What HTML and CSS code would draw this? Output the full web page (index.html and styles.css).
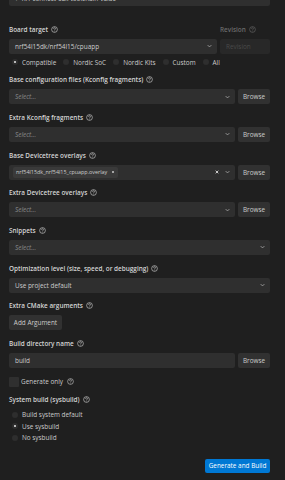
FILE: index.html
```html
<!DOCTYPE html>
<html lang="en">
<head>
  <meta charset="UTF-8">
  <meta name="viewport" content="width=device-width, initial-scale=1.0">
  <title>Add Build Configuration</title>
  <link rel="stylesheet" href="styles.css">
</head>
<body>
  <div class="panel">
    <!-- toolchain select, scrolled mostly out of view -->
    <div class="select select-top">
      <span class="value">&#10003; nrf-connect-sdk-toolchain-value</span>
    </div>

    <div class="field board">
      <div class="board-row">
        <div class="board-main">
          <div class="label">Board target <span class="help"><svg viewBox="0 0 8 8"><circle cx="4" cy="4" r="3.3"/><path d="M2.9 3.1a1.1 1.1 0 1 1 1.6 1c-.4.2-.5.4-.5.8"/><circle class="dot" cx="4" cy="6" r=".35"/></svg></span></div>
          <div class="select">
            <span class="value">nrf54l15dk/nrf54l15/cpuapp</span>
            <svg class="chevron" viewBox="0 0 8 5"><path d="M1 1l3 3 3-3"/></svg>
          </div>
        </div>
        <div class="board-rev">
          <div class="label disabled">Revision <span class="help"><svg viewBox="0 0 8 8"><circle cx="4" cy="4" r="3.3"/><path d="M2.9 3.1a1.1 1.1 0 1 1 1.6 1c-.4.2-.5.4-.5.8"/><circle class="dot" cx="4" cy="6" r=".35"/></svg></span></div>
          <div class="input input-disabled">Revision</div>
        </div>
      </div>
      <div class="radios radios-inline">
        <span class="radio-item"><span class="radio checked"></span>Compatible</span>
        <span class="radio-item"><span class="radio"></span>Nordic SoC</span>
        <span class="radio-item"><span class="radio"></span>Nordic Kits</span>
        <span class="radio-item"><span class="radio"></span>Custom</span>
        <span class="radio-item"><span class="radio"></span>All</span>
      </div>
    </div>

    <div class="field">
      <div class="label">Base configuration files (Kconfig fragments) <span class="help"><svg viewBox="0 0 8 8"><circle cx="4" cy="4" r="3.3"/><path d="M2.9 3.1a1.1 1.1 0 1 1 1.6 1c-.4.2-.5.4-.5.8"/><circle class="dot" cx="4" cy="6" r=".35"/></svg></span></div>
      <div class="row">
        <div class="select">
          <span class="placeholder">Select...</span>
          <svg class="chevron" viewBox="0 0 8 5"><path d="M1 1l3 3 3-3"/></svg>
        </div>
        <button class="btn">Browse</button>
      </div>
    </div>

    <div class="field">
      <div class="label">Extra Kconfig fragments <span class="help"><svg viewBox="0 0 8 8"><circle cx="4" cy="4" r="3.3"/><path d="M2.9 3.1a1.1 1.1 0 1 1 1.6 1c-.4.2-.5.4-.5.8"/><circle class="dot" cx="4" cy="6" r=".35"/></svg></span></div>
      <div class="row">
        <div class="select">
          <span class="placeholder">Select...</span>
          <svg class="chevron" viewBox="0 0 8 5"><path d="M1 1l3 3 3-3"/></svg>
        </div>
        <button class="btn">Browse</button>
      </div>
    </div>

    <div class="field">
      <div class="label">Base Devicetree overlays <span class="help"><svg viewBox="0 0 8 8"><circle cx="4" cy="4" r="3.3"/><path d="M2.9 3.1a1.1 1.1 0 1 1 1.6 1c-.4.2-.5.4-.5.8"/><circle class="dot" cx="4" cy="6" r=".35"/></svg></span></div>
      <div class="row">
        <div class="select">
          <span class="chip">nrf54l15dk_nrf54l15_cpuapp.overlay <svg class="chip-x" viewBox="0 0 6 6"><path d="M1.5 1.5l3 3M4.5 1.5l-3 3"/></svg></span>
          <svg class="clear" viewBox="0 0 6 6"><path d="M1 1l4 4M5 1l-4 4"/></svg>
          <svg class="chevron" viewBox="0 0 8 5"><path d="M1 1l3 3 3-3"/></svg>
        </div>
        <button class="btn">Browse</button>
      </div>
    </div>

    <div class="field">
      <div class="label">Extra Devicetree overlays <span class="help"><svg viewBox="0 0 8 8"><circle cx="4" cy="4" r="3.3"/><path d="M2.9 3.1a1.1 1.1 0 1 1 1.6 1c-.4.2-.5.4-.5.8"/><circle class="dot" cx="4" cy="6" r=".35"/></svg></span></div>
      <div class="row">
        <div class="select">
          <span class="placeholder">Select...</span>
          <svg class="chevron" viewBox="0 0 8 5"><path d="M1 1l3 3 3-3"/></svg>
        </div>
        <button class="btn">Browse</button>
      </div>
    </div>

    <div class="field">
      <div class="label">Snippets <span class="help"><svg viewBox="0 0 8 8"><circle cx="4" cy="4" r="3.3"/><path d="M2.9 3.1a1.1 1.1 0 1 1 1.6 1c-.4.2-.5.4-.5.8"/><circle class="dot" cx="4" cy="6" r=".35"/></svg></span></div>
      <div class="select">
        <span class="placeholder">Select...</span>
        <svg class="chevron" viewBox="0 0 8 5"><path d="M1 1l3 3 3-3"/></svg>
      </div>
    </div>

    <div class="field">
      <div class="label">Optimization level (size, speed, or debugging) <span class="help"><svg viewBox="0 0 8 8"><circle cx="4" cy="4" r="3.3"/><path d="M2.9 3.1a1.1 1.1 0 1 1 1.6 1c-.4.2-.5.4-.5.8"/><circle class="dot" cx="4" cy="6" r=".35"/></svg></span></div>
      <div class="select">
        <span class="value">Use project default</span>
        <svg class="chevron" viewBox="0 0 8 5"><path d="M1 1l3 3 3-3"/></svg>
      </div>
    </div>

    <div class="field">
      <div class="label">Extra CMake arguments <span class="help"><svg viewBox="0 0 8 8"><circle cx="4" cy="4" r="3.3"/><path d="M2.9 3.1a1.1 1.1 0 1 1 1.6 1c-.4.2-.5.4-.5.8"/><circle class="dot" cx="4" cy="6" r=".35"/></svg></span></div>
      <div class="row">
        <button class="btn btn-add">Add Argument</button>
      </div>
    </div>

    <div class="field">
      <div class="label">Build directory name <span class="help"><svg viewBox="0 0 8 8"><circle cx="4" cy="4" r="3.3"/><path d="M2.9 3.1a1.1 1.1 0 1 1 1.6 1c-.4.2-.5.4-.5.8"/><circle class="dot" cx="4" cy="6" r=".35"/></svg></span></div>
      <div class="row">
        <div class="input">build</div>
        <button class="btn">Browse</button>
      </div>
    </div>

    <div class="check-row">
      <span class="checkbox"></span>
      <span>Generate only</span>
      <span class="help"><svg viewBox="0 0 8 8"><circle cx="4" cy="4" r="3.3"/><path d="M2.9 3.1a1.1 1.1 0 1 1 1.6 1c-.4.2-.5.4-.5.8"/><circle class="dot" cx="4" cy="6" r=".35"/></svg></span>
    </div>

    <div class="field sysbuild">
      <div class="label">System build (sysbuild) <span class="help"><svg viewBox="0 0 8 8"><circle cx="4" cy="4" r="3.3"/><path d="M2.9 3.1a1.1 1.1 0 1 1 1.6 1c-.4.2-.5.4-.5.8"/><circle class="dot" cx="4" cy="6" r=".35"/></svg></span></div>
      <div class="radios radios-stack">
        <span class="radio-item"><span class="radio"></span>Build system default</span>
        <span class="radio-item"><span class="radio checked"></span>Use sysbuild</span>
        <span class="radio-item"><span class="radio"></span>No sysbuild</span>
      </div>
    </div>

    <div class="actions">
      <button class="btn btn-primary">Generate and Build</button>
    </div>
  </div>
</body>
</html>
```

FILE: styles.css
```css
body {
  margin: 0;
  padding: 0;
  background-color: #1f1f1f;
  color: #cccccc;
  font-family: "Open Sans", "Noto Sans", sans-serif;
  font-size: 6.4px;
  overflow: hidden;
}

.panel {
  padding: 0 15px 0 9px;
  margin-top: -9px;
}

.field {
  margin-bottom: 8.7px;
}

.board {
  margin-top: 18.5px;
}

.label {
  display: flex;
  align-items: center;
  gap: 3px;
  height: 9px;
  margin-bottom: 5px;
  font-weight: 600;
  color: #d4d4d4;
  white-space: nowrap;
}

.label.disabled {
  color: #6b6b6b;
}

.help {
  display: inline-flex;
  width: 7px;
  height: 7px;
}

.help svg {
  width: 7px;
  height: 7px;
  fill: none;
  stroke: currentColor;
  stroke-width: 0.7;
}

.help svg .dot {
  fill: currentColor;
  stroke: none;
}

.row {
  display: flex;
  gap: 3px;
}

.select,
.input {
  flex: 1;
  display: flex;
  align-items: center;
  height: 15px;
  padding: 0 5px 0 6px;
  background-color: #2f2f2f;
  border-radius: 2px;
  box-sizing: border-box;
  min-width: 0;
}

.select .value,
.select .placeholder {
  flex: 1;
  white-space: nowrap;
}

.placeholder {
  color: #8a8a8a;
  font-style: italic;
}

.chevron {
  width: 5px;
  height: 4px;
  fill: none;
  stroke: #c8c8c8;
  stroke-width: 1;
}

.input-disabled {
  background-color: #282828;
  color: #4a4a4a;
}

.board-row {
  display: flex;
  gap: 3px;
}

.board-main {
  flex: 1;
}

.board-rev {
  width: 50px;
}

.radios-inline {
  display: flex;
  gap: 7px;
  height: 9px;
  margin-top: 4px;
  padding-left: 3px;
}

.radio-item {
  display: flex;
  align-items: center;
  gap: 4px;
  white-space: nowrap;
}

.radio {
  display: inline-flex;
  align-items: center;
  justify-content: center;
  width: 6px;
  height: 6px;
  border-radius: 50%;
  background-color: #2e2e2e;
}

.radio.checked::after {
  content: "";
  width: 2px;
  height: 2px;
  border-radius: 50%;
  background-color: #e8e8e8;
}

.radios-stack {
  display: flex;
  flex-direction: column;
  padding-left: 3px;
}

.radios-stack .radio-item {
  height: 11.5px;
}

.chip {
  display: flex;
  align-items: center;
  gap: 4px;
  height: 11px;
  padding: 0 3px;
  background-color: #3a3a3a;
  border-radius: 2px;
  font-size: 5.4px;
  white-space: nowrap;
  margin-left: -2px;
}

.chip-x {
  width: 4px;
  height: 4px;
  stroke: #dddddd;
  stroke-width: 1;
}

.clear {
  width: 4px;
  height: 4px;
  margin-left: auto;
  margin-right: 6px;
  stroke: #e6e6e6;
  stroke-width: 1.3;
}

.btn {
  height: 15px;
  padding: 0 6px;
  border: none;
  border-radius: 2px;
  background-color: #313131;
  color: #cccccc;
  font-family: inherit;
  font-size: 6.4px;
  cursor: pointer;
}

.row .btn {
  width: 32px;
  padding: 0;
}

.row .btn-add {
  width: 53px;
}

.check-row {
  display: flex;
  align-items: center;
  gap: 2px;
  height: 10px;
  margin-top: 8.5px;
  margin-bottom: 8.5px;
}

.checkbox {
  width: 10px;
  height: 10px;
  background-color: #2f2f2f;
  border-radius: 1px;
}

.check-row .help {
  margin-left: 2px;
}

.actions {
  display: flex;
  justify-content: flex-end;
  margin-top: 15px;
}

.btn-primary {
  width: 65px;
  height: 14px;
  padding: 0;
  background-color: #0078d4;
  color: #ffffff;
}
```
